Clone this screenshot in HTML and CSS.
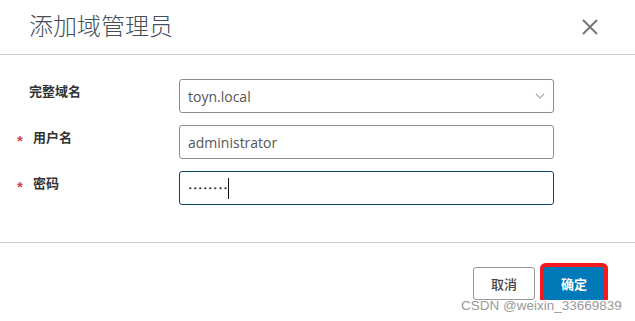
FILE: index.html
```html
<!DOCTYPE html>
<html lang="zh-CN">
<head>
    <meta charset="UTF-8">
    <meta name="viewport" content="width=device-width, initial-scale=1.0">
    <title>添加域管理员</title>
    <link rel="stylesheet" href="styles.css">
</head>
<body>
<div class="modal">
    <div class="modal-header">
        <h2 class="modal-title">添加域管理员</h2>
        <span class="close-button">
            <svg width="18" height="18" viewBox="0 0 18 18">
                <path d="M2 2 L16 16 M16 2 L2 16" stroke="#777" stroke-width="2" fill="none"/>
            </svg>
        </span>
    </div>

    <div class="modal-body">
        <div class="form-row">
            <label class="form-label no-star">完整域名</label>
            <div class="field select-field">
                <span>toyn.local</span>
                <svg width="10" height="6" viewBox="0 0 10 6">
                    <path d="M1 1 L5 5 L9 1" stroke="#aaa" stroke-width="1.2" fill="none"/>
                </svg>
            </div>
        </div>
        <div class="form-row">
            <label class="form-label"><span class="required">*</span>用户名</label>
            <div class="field">
                <span>administrator</span>
            </div>
        </div>
        <div class="form-row">
            <label class="form-label"><span class="required">*</span>密码</label>
            <div class="field focused">
                <span class="password-dots">••••••••</span><span class="caret"></span>
            </div>
        </div>
    </div>

    <div class="modal-footer">
        <button class="modal-button cancel">取消</button>
        <button class="modal-button confirm">确定</button>
    </div>
</div>

<div class="watermark">CSDN @weixin_33669839</div>
</body>
</html>
```

FILE: styles.css
```css
body {
    margin: 0;
    background-color: #fff;
    font-family: "Noto Sans CJK SC", sans-serif;
}

.modal {
    width: 635px;
}

.modal-header {
    display: flex;
    justify-content: space-between;
    align-items: center;
    height: 55px;
    padding: 0 36px 5px 29px;
    box-sizing: border-box;
    border-bottom: 1px solid #cccccc;
}

.modal-title {
    margin: 0;
    font-size: 24px;
    font-weight: 300;
    line-height: 30px;
    color: #454f5b;
}

.close-button {
    display: flex;
    margin-top: 4px;
}

.modal-body {
    padding: 24px 0 37px 0;
    border-bottom: 1px solid #cccccc;
    display: flex;
    flex-direction: column;
    gap: 12px;
}

.form-row {
    display: flex;
    align-items: flex-start;
}

.form-label {
    width: 162px;
    padding-left: 17px;
    padding-top: 2px;
    font-size: 13px;
    font-weight: 700;
    line-height: 20px;
    color: #333;
}

.form-label.no-star {
    width: 150px;
    padding-left: 29px;
}

.required {
    display: inline-block;
    width: 16px;
    font-family: "Liberation Sans", Arial, sans-serif;
    font-size: 15px;
    color: #d0455a;
    font-weight: 700;
    vertical-align: -4px;
}

.field {
    display: flex;
    align-items: center;
    width: 375px;
    height: 34px;
    box-sizing: border-box;
    padding: 0 8px;
    border: 1px solid #8c8c8c;
    border-radius: 3px;
    font-family: "Open Sans", sans-serif;
    font-size: 14px;
    color: #565656;
}

.select-field {
    justify-content: space-between;
    padding-right: 8px;
}

.field.focused {
    border-color: #0b4a6b;
}

.password-dots {
    font-family: "DejaVu Sans", sans-serif;
    font-size: 7.5px;
    letter-spacing: 0.6px;
    color: #333;
}

.caret {
    display: inline-block;
    width: 1px;
    height: 21px;
    background-color: #111;
    margin-left: 0;
}

.modal-footer {
    display: flex;
    justify-content: flex-end;
    gap: 9px;
    padding: 24px 31px 0 0;
}

.modal-button {
    height: 33px;
    padding: 0 16px;
    border-radius: 3px;
    font-family: "Noto Sans CJK SC", sans-serif;
    font-size: 13px;
    font-weight: 500;
    cursor: pointer;
}

.modal-button.cancel {
    width: 62px;
    background-color: #fff;
    border: 1px solid #999;
    color: #444;
}

.modal-button.confirm {
    width: 60px;
    background-color: #0079b8;
    border: none;
    color: #fff;
    font-weight: 700;
    box-shadow: 0 0 0 4px #f5191e;
    border-radius: 2px;
}

.watermark {
    position: absolute;
    left: 461px;
    top: 298px;
    font-family: "Liberation Sans", Arial, sans-serif;
    font-size: 13.5px;
    line-height: 16px;
    color: #9a9a9a;
    text-shadow: 0 0 2px #fff;
}
```
